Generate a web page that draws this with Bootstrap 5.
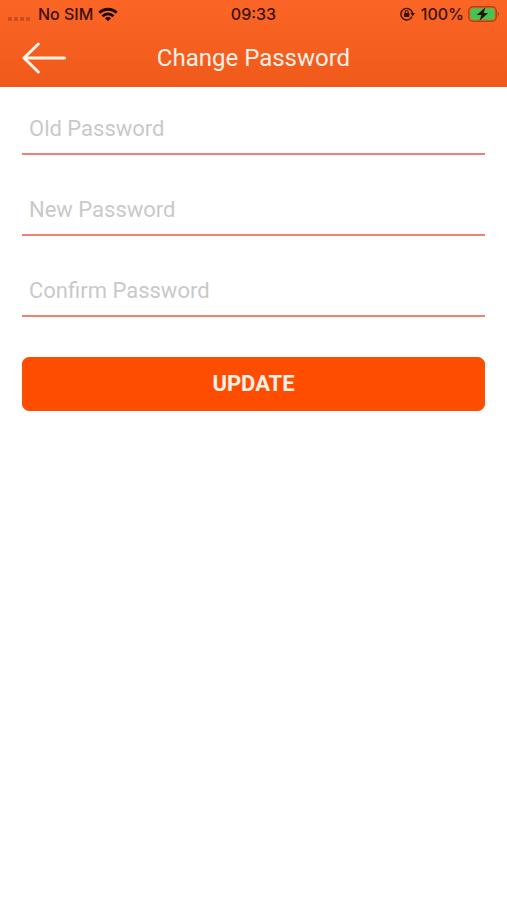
<!DOCTYPE html>
<html lang="en">
<head>
<meta charset="utf-8">
<meta name="viewport" content="width=device-width, initial-scale=1">
<title>Change Password</title>
<link href="https://cdn.jsdelivr.net/npm/bootstrap@5.3.0/dist/css/bootstrap.min.css" rel="stylesheet">
<style>
  body { font-family: Roboto, "Liberation Sans", sans-serif; }
  .app-header { background: linear-gradient(#fb6626, #ef5a1a); }
  .status-bar {
    display: grid;
    grid-template-columns: 1fr auto 1fr;
    height: 28px;
    padding: 0 8px;
    font: 500 16px/28px Inter, "Liberation Sans", sans-serif;
    color: #3a1206;
  }
  .signal-dots { gap: 2px; padding-top: 10px; }
  .signal-dots span { width: 4px; height: 4px; border-radius: 1px; background: #c9501d; }
  .lock-icon { margin-right: 6px; }
  .title-bar {
    display: grid;
    grid-template-columns: 1fr auto 1fr;
    height: 59px;
    padding: 0 22px;
  }
  .title-bar h1 { font-size: 24px; line-height: 28px; font-weight: 400; color: #fff0e6; }
  .form-area { padding: 17px 22px; }
  .line-input {
    height: 51px;
    margin-bottom: 30px;
    padding: 0 7px;
    border: 0;
    border-bottom: 2px solid #ee8173;
    border-radius: 0;
    font-size: 22px;
  }
  .line-input:focus { box-shadow: none; border-color: #ff4d00; }
  .line-input::placeholder { color: #c9c9c9; opacity: 1; }
  .btn-update {
    --bs-btn-color: #fff0e8;
    --bs-btn-bg: #ff4d00;
    --bs-btn-border-color: #ff4d00;
    --bs-btn-hover-color: #fff;
    --bs-btn-hover-bg: #e64500;
    --bs-btn-hover-border-color: #e64500;
    height: 54px;
    margin-top: 10px;
    border-radius: 7px;
    font-size: 22px;
    font-weight: 700;
    line-height: 26px;
  }
</style>
</head>
<body class="bg-white">
<header class="app-header">
  <div class="status-bar align-items-center">
    <div class="d-flex align-items-center">
      <span class="signal-dots d-flex me-1"><span></span><span></span><span></span><span></span></span>
      <span class="ms-1 me-1">No SIM</span>
      <svg width="22" height="15" viewBox="0 0 22 16" fill="none" stroke="#1c0802" stroke-width="3" aria-hidden="true">
        <path d="M1.7 6.2a13.2 13.2 0 0 1 18.6 0"/>
        <path d="M5.2 9.8a8.2 8.2 0 0 1 11.6 0"/>
        <path d="M11 15.2l-3.2-3.3a4.5 4.5 0 0 1 6.4 0z" fill="#1c0802" stroke="none"/>
      </svg>
    </div>
    <div>09:33</div>
    <div class="d-flex align-items-center justify-content-end">
      <svg class="lock-icon" width="15" height="14" viewBox="0 0 15 14" aria-hidden="true">
        <path d="M12 9.6A5.8 5.8 0 1 1 12.4 6" fill="none" stroke="#3a1206" stroke-width="1.4"/>
        <path d="M10.4 6H15l-2.3 3.2z" fill="#3a1206"/>
        <rect x="4" y="6" width="5.4" height="4" rx=".7" fill="#3a1206"/>
        <path d="M5.2 6.4V5a1.5 1.5 0 0 1 3 0v1.4" fill="none" stroke="#3a1206" stroke-width="1.2"/>
      </svg>
      <span class="me-1">100%</span>
      <svg width="31" height="16" viewBox="0 0 31 16" aria-hidden="true">
        <rect x=".8" y=".8" width="27.4" height="14.4" rx="4" fill="none" stroke="#a5481b" stroke-width="1.5"/>
        <rect x="2.5" y="2.5" width="24" height="11" rx="2.4" fill="#3fc653"/>
        <path d="M29.6 5.4c1.8 .8 1.8 4.4 0 5.2z" fill="#a5481b"/>
        <path d="M17.4 1.2L8.8 9h4.6l-1.8 5.8L20.200 7h-4.600z" fill="#241006"/>
      </svg>
    </div>
  </div>
  <div class="title-bar align-items-center">
    <a href="#" class="d-inline-flex" aria-label="Back">
      <svg width="44" height="32" viewBox="0 0 44 32" fill="none" stroke="#fff3ea" stroke-width="3" stroke-linecap="round" stroke-linejoin="round" aria-hidden="true">
        <path d="M16.3 2L2 16l14.3 14M2 16h40.5"/>
      </svg>
    </a>
    <h1 class="m-0">Change Password</h1>
  </div>
</header>
<main>
  <form class="form-area">
    <input type="password" class="form-control line-input" aria-label="Old Password" placeholder="Old Password">
    <input type="password" class="form-control line-input" aria-label="New Password" placeholder="New Password">
    <input type="password" class="form-control line-input" aria-label="Confirm Password" placeholder="Confirm Password">
    <button type="submit" class="btn btn-update w-100">UPDATE</button>
  </form>
</main>
<script src="https://cdn.jsdelivr.net/npm/bootstrap@5.3.0/dist/js/bootstrap.bundle.min.js"></script>
</body>
</html>
